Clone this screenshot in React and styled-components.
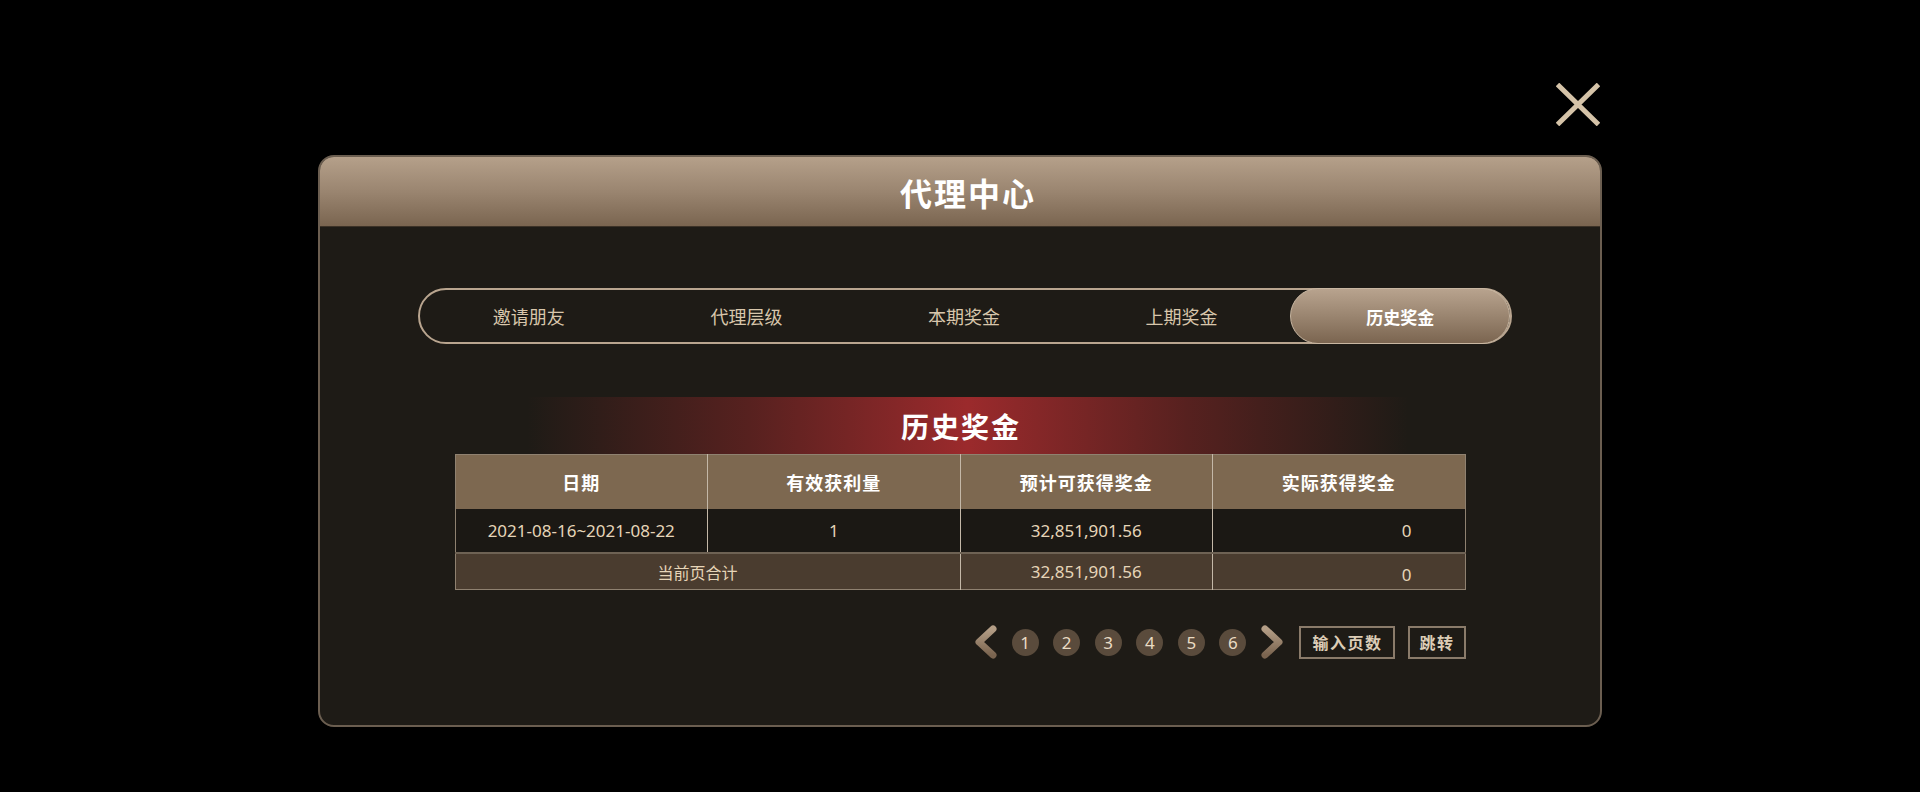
import React, { useState } from 'react';
import styled, { createGlobalStyle } from 'styled-components';

const GlobalStyle = createGlobalStyle`
  html, body {
    margin: 0;
    padding: 0;
    background: #000;
  }
  body {
    font-family: "Noto Sans", "Noto Sans CJK SC", sans-serif;
  }
`;

const Page = styled.div`
  min-height: 792px;
  display: flex;
  justify-content: center;
  padding-top: 83px;
  box-sizing: border-box;
`;

const Wrapper = styled.div`
  width: 1284px;
  display: flex;
  flex-direction: column;
  align-items: flex-end;
  gap: 29px;
`;

const CloseButton = styled.button`
  width: 44px;
  height: 43px;
  padding: 0;
  margin-right: 2px;
  border: none;
  background: transparent;
  cursor: pointer;
  display: block;
`;

const Modal = styled.div`
  align-self: stretch;
  height: 572px;
  box-sizing: border-box;
  border: 2px solid #6b5e50;
  border-radius: 16px;
  overflow: hidden;
  background: #1e1b16;
  display: flex;
  flex-direction: column;
`;

const Header = styled.div`
  height: 69px;
  flex-shrink: 0;
  display: flex;
  align-items: center;
  justify-content: center;
  padding-left: 16px;
  background: linear-gradient(180deg, #b5a08a 0%, #9a8570 50%, #7a6550 100%);
  border-bottom: 1px solid #3c3227;
`;

const Title = styled.h1`
  margin: 0;
  font-family: "Noto Sans CJK SC", sans-serif;
  font-size: 32px;
  font-weight: 700;
  letter-spacing: 2px;
  color: #fff;
`;

const Body = styled.div`
  display: flex;
  flex-direction: column;
  align-items: center;
  padding-top: 61px;
`;

const Tabs = styled.div`
  width: 1094px;
  height: 56px;
  margin-left: 10px;
  box-sizing: border-box;
  border: 2px solid #b9a58f;
  border-radius: 28px;
  display: flex;
  align-items: stretch;
`;

const Tab = styled.button`
  flex: 1;
  margin: -2px 0;
  border: ${p => (p.$active ? '1px solid #c9b7a2' : 'none')};
  border-radius: 28px;
  padding: 0;
  cursor: pointer;
  font-family: "Noto Sans CJK SC", sans-serif;
  font-size: ${p => (p.$active ? '17px' : '18px')};
  font-weight: ${p => (p.$active ? 700 : 400)};
  color: ${p => (p.$active ? '#fff' : '#d8c6ab')};
  background: ${p =>
    p.$active ? 'linear-gradient(180deg, #b8a38e 0%, #9a8570 50%, #7b6550 100%)' : 'transparent'};
`;

const Section = styled.div`
  width: 1011px;
  margin-top: 53px;
  display: flex;
  flex-direction: column;
  align-items: center;
`;

const Banner = styled.div`
  width: 881px;
  height: 57px;
  margin-left: 14px;
  display: flex;
  align-items: center;
  justify-content: center;
  background: linear-gradient(
    90deg,
    rgba(155, 40, 42, 0) 0%,
    rgba(155, 40, 42, 0.45) 25%,
    #9b2a2c 50%,
    rgba(155, 40, 42, 0.45) 75%,
    rgba(155, 40, 42, 0) 100%
  );
`;

const BannerTitle = styled.h2`
  margin: 0 12px 0 0;
  font-family: "Noto Sans CJK SC", sans-serif;
  font-size: 28px;
  font-weight: 700;
  letter-spacing: 2px;
  color: #fff;
`;

const Table = styled.table`
  width: 100%;
  border-collapse: collapse;
  table-layout: fixed;
  border: 1px solid #8f8170;
`;

const Th = styled.th`
  height: 54px;
  padding: 0;
  background: #7d6850;
  color: #fff;
  font-family: "Noto Sans CJK SC", sans-serif;
  font-size: 18px;
  font-weight: 700;
  letter-spacing: 1px;
  border-left: 1px solid #c4b8a8;
  &:first-child {
    border-left: none;
  }
`;

const Row = styled.tr`
  background: ${p => (p.$total ? '#4a3c2f' : '#1b1814')};
  border-top: ${p => (p.$total ? '2px solid #6e6254' : 'none')};
`;

const Td = styled.td`
  height: ${p => (p.$total ? (p.$right ? '29px' : '35px') : '43px')};
  padding: ${p =>
    p.$right ? `${p.$total ? '6px' : '0'} 53px 0 0` : p.$label ? '0 20px 0 0' : '0'};
  text-align: ${p => (p.$right ? 'right' : 'center')};
  color: #e6d5b8;
  font-family: "Noto Sans", "Noto Sans CJK SC", sans-serif;
  font-size: ${p => (p.$label ? '16px' : '17px')};
  border-left: 1px solid #c4b8a8;
  &:first-child {
    border-left: none;
  }
`;

const Pager = styled.div`
  align-self: flex-end;
  margin-top: 35px;
  display: flex;
  align-items: center;
`;

const Arrow = styled.button`
  width: 24px;
  height: 34px;
  padding: 0;
  border: none;
  background: transparent;
  cursor: pointer;
  display: flex;
  margin: ${p => (p.$next ? '0 15px 0 14px' : '0 14px 0 0')};
`;

const PageDots = styled.div`
  display: flex;
  gap: 14.6px;
`;

const PageDot = styled.button`
  width: 27px;
  height: 27px;
  padding: 0;
  border: none;
  border-radius: 50%;
  background: #5a4b3c;
  color: #eadcc4;
  font-family: "Noto Sans", sans-serif;
  font-size: 17px;
  line-height: 27px;
  cursor: pointer;
`;

const PagerButton = styled.button`
  height: 33px;
  padding: 0 ${p => (p.$wide ? '11px' : '9px')};
  margin-left: ${p => (p.$gap ? '13px' : '0')};
  box-sizing: border-box;
  border: 2px solid #8a7b6a;
  background: transparent;
  color: #dccdb6;
  font-family: "Noto Sans CJK SC", sans-serif;
  font-size: 16px;
  font-weight: 700;
  letter-spacing: 1.5px;
  cursor: pointer;
`;

const Chevron = ({ dir }) => (
  <svg width="24" height="34" viewBox="0 0 24 34">
    <defs>
      <linearGradient id={`chev-${dir}`} x1="0" y1="0" x2="0" y2="1">
        <stop offset="0" stopColor="#b49e86" />
        <stop offset="1" stopColor="#7a644f" />
      </linearGradient>
    </defs>
    <polyline
      points={dir === 'left' ? '19,4 5,17 19,30' : '5,4 19,17 5,30'}
      fill="none"
      stroke={`url(#chev-${dir})`}
      strokeWidth="7"
      strokeLinecap="round"
      strokeLinejoin="round"
    />
  </svg>
);

const tabs = ['邀请朋友', '代理层级', '本期奖金', '上期奖金', '历史奖金'];

const App = () => {
  const [active, setActive] = useState(4);

  return (
    <Page>
      <GlobalStyle />
      <Wrapper>
        <CloseButton aria-label="close">
          <svg width="44" height="43" viewBox="0 0 44 43">
            <path d="M1.5 1.5 L42.5 41.5 M42.5 1.5 L1.5 41.5" stroke="#d5c3a8" strokeWidth="5" />
          </svg>
        </CloseButton>
        <Modal>
          <Header>
            <Title>代理中心</Title>
          </Header>
          <Body>
            <Tabs>
              {tabs.map((t, i) => (
                <Tab key={t} $active={i === active} onClick={() => setActive(i)}>
                  {t}
                </Tab>
              ))}
            </Tabs>
            <Section>
              <Banner>
                <BannerTitle>历史奖金</BannerTitle>
              </Banner>
              <Table>
                <thead>
                  <tr>
                    <Th>日期</Th>
                    <Th>有效获利量</Th>
                    <Th>预计可获得奖金</Th>
                    <Th>实际获得奖金</Th>
                  </tr>
                </thead>
                <tbody>
                  <Row>
                    <Td>2021-08-16~2021-08-22</Td>
                    <Td>1</Td>
                    <Td>32,851,901.56</Td>
                    <Td $right>0</Td>
                  </Row>
                  <Row $total>
                    <Td $total $label colSpan={2}>当前页合计</Td>
                    <Td $total>32,851,901.56</Td>
                    <Td $total $right>0</Td>
                  </Row>
                </tbody>
              </Table>
              <Pager>
                <Arrow aria-label="prev">
                  <Chevron dir="left" />
                </Arrow>
                <PageDots>
                  {[1, 2, 3, 4, 5, 6].map(n => (
                    <PageDot key={n}>{n}</PageDot>
                  ))}
                </PageDots>
                <Arrow $next aria-label="next">
                  <Chevron dir="right" />
                </Arrow>
                <PagerButton $wide>输入页数</PagerButton>
                <PagerButton $gap>跳转</PagerButton>
              </Pager>
            </Section>
          </Body>
        </Modal>
      </Wrapper>
    </Page>
  );
};

export default App;
